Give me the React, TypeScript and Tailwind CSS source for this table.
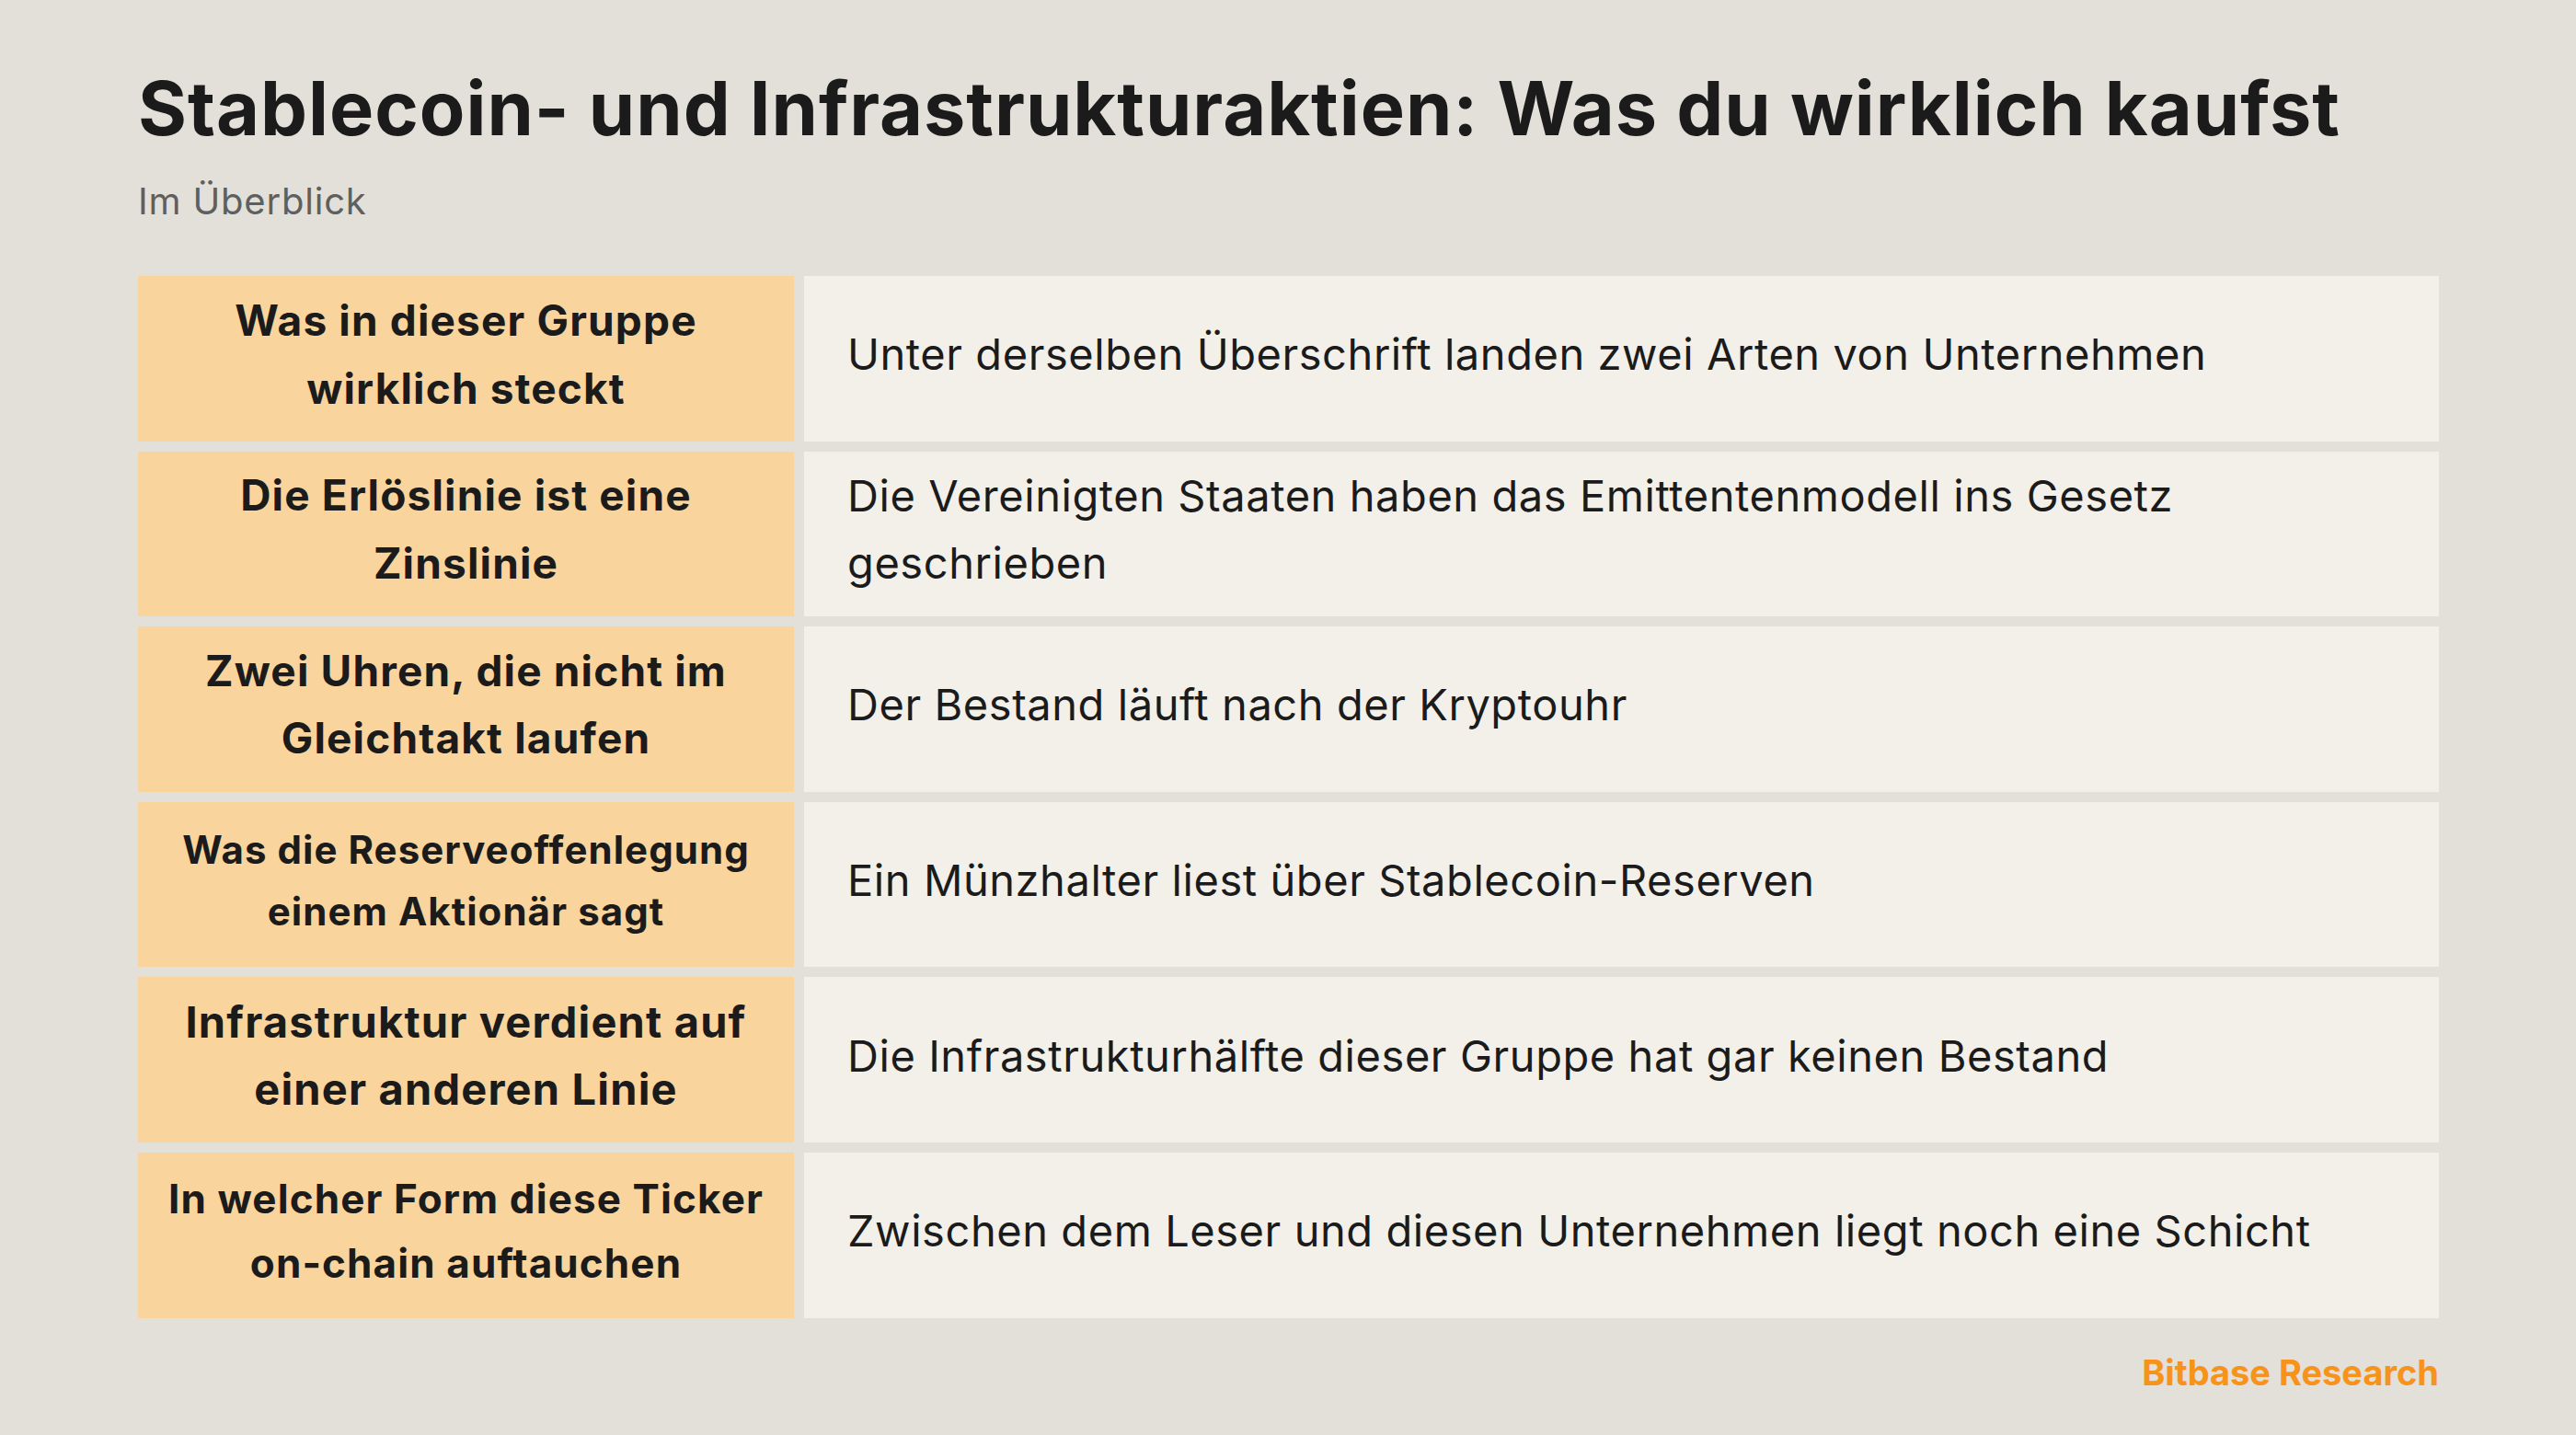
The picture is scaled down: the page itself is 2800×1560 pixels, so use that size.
const rows = [
  { head: 'Was in dieser Gruppe wirklich steckt', size: 'text-[46px] leading-[74px]', text: 'Unter derselben Überschrift landen zwei Arten von Unternehmen' },
  { head: 'Die Erlöslinie ist eine Zinslinie', size: 'text-[46px] leading-[74px]', text: 'Die Vereinigten Staaten haben das Emittentenmodell ins Gesetz geschrieben' },
  { head: 'Zwei Uhren, die nicht im Gleichtakt laufen', size: 'text-[46px] leading-[73px]', text: 'Der Bestand läuft nach der Kryptouhr' },
  { head: 'Was die Reserveoffenlegung einem Aktionär sagt', size: 'text-[42px] leading-[67px]', text: 'Ein Münzhalter liest über Stablecoin-Reserven' },
  { head: 'Infrastruktur verdient auf einer anderen Linie', size: 'text-[47px] leading-[73px]', text: 'Die Infrastrukturhälfte dieser Gruppe hat gar keinen Bestand' },
  { head: 'In welcher Form diese Ticker on-chain auftauchen', size: 'text-[44px] leading-[70px]', text: 'Zwischen dem Leser und diesen Unternehmen liegt noch eine Schicht' },
]

export default function App() {
  return (
    <div className="w-[2800px] h-[1560px] bg-[#E3DFD9] px-[150px] pt-[78px] font-['Inter',sans-serif] text-[#1b1b1b]">
      {/* Header */}
      <h1 className="text-[81px] leading-none font-bold tracking-[0.012em]">
        Stablecoin- und Infrastrukturaktien: Was du wirklich kaufst
      </h1>
      <p className="mt-[40px] text-[40px] leading-none tracking-[0.02em] text-[#5f5f5f]">Im Überblick</p>

      {/* Table */}
      <div className="mt-[61px] w-[2501px] grid grid-cols-[713px_1777px] gap-[11px]">
        {rows.map((row) => (
          <div key={row.head} className="contents">
            <div className="h-[179.6px] bg-[#F9D49C] flex items-center justify-center px-[30px] pb-[10px]">
              <p className={`${row.size} font-bold tracking-[0.025em] text-center`}>{row.head}</p>
            </div>
            <div className="h-[179.6px] bg-[#F3F0EA] flex items-center px-[47px] pb-[10px]">
              <p className="text-[47px] leading-[73px] tracking-[0.012em]">{row.text}</p>
            </div>
          </div>
        ))}
      </div>

      {/* Footer */}
      <div className="w-[2501px] mt-[40px] flex justify-end">
        <span className="text-[38px] leading-none font-bold text-[#F7931A]">Bitbase Research</span>
      </div>
    </div>
  )
}
